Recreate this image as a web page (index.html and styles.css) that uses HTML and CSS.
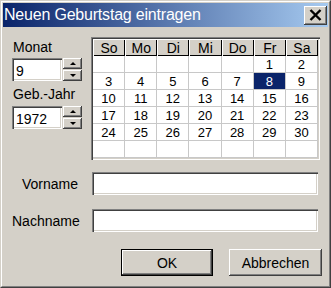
FILE: index.html
```html
<!DOCTYPE html>
<html lang="de">
<head>
    <meta charset="UTF-8">
    <title>Neuen Geburtstag eintragen</title>
    <link rel="stylesheet" href="styles.css">
</head>
<body>
    <div class="window">
        <div class="frame">
            <div class="titlebar">
                <span class="title">Neuen Geburtstag eintragen</span>
                <span class="close">
                    <svg width="13" height="12" viewBox="0 0 13 12">
                        <path d="M1.5 1 L11.5 11 M11.5 1 L1.5 11" stroke="#000" stroke-width="2.4" fill="none"/>
                    </svg>
                </span>
            </div>

            <div class="content">
                <div class="top">
                    <div class="side">
                        <label class="lbl">Monat</label>
                        <div class="spin">
                            <input class="field" type="text" value="9">
                            <div class="arrows">
                                <span class="arrow"><i class="up"></i></span>
                                <span class="arrow"><i class="down"></i></span>
                            </div>
                        </div>

                        <label class="lbl lbl-year">Geb.-Jahr</label>
                        <div class="spin">
                            <input class="field" type="text" value="1972">
                            <div class="arrows">
                                <span class="arrow"><i class="up"></i></span>
                                <span class="arrow"><i class="down"></i></span>
                            </div>
                        </div>
                    </div>

                    <div class="calendar">
                        <div class="cal-grid">
                            <div class="head">So</div>
                            <div class="head">Mo</div>
                            <div class="head">Di</div>
                            <div class="head">Mi</div>
                            <div class="head">Do</div>
                            <div class="head">Fr</div>
                            <div class="head">Sa</div>

                            <div class="day"></div><div class="day"></div><div class="day"></div><div class="day"></div><div class="day"></div><div class="day">1</div><div class="day">2</div>
                            <div class="day">3</div><div class="day">4</div><div class="day">5</div><div class="day">6</div><div class="day">7</div><div class="day selected">8</div><div class="day">9</div>
                            <div class="day">10</div><div class="day">11</div><div class="day">12</div><div class="day">13</div><div class="day">14</div><div class="day">15</div><div class="day">16</div>
                            <div class="day">17</div><div class="day">18</div><div class="day">19</div><div class="day">20</div><div class="day">21</div><div class="day">22</div><div class="day">23</div>
                            <div class="day">24</div><div class="day">25</div><div class="day">26</div><div class="day">27</div><div class="day">28</div><div class="day">29</div><div class="day">30</div>
                            <div class="day"></div><div class="day"></div><div class="day"></div><div class="day"></div><div class="day"></div><div class="day"></div><div class="day"></div>
                        </div>
                    </div>
                </div>

                <div class="names">
                    <label class="name-lbl" for="vorname">Vorname</label>
                    <input class="field name-field" type="text" id="vorname">

                    <label class="name-lbl" for="nachname">Nachname</label>
                    <input class="field name-field" type="text" id="nachname">
                </div>

                <div class="buttons">
                    <button class="btn btn-default">OK</button>
                    <button class="btn">Abbrechen</button>
                </div>
            </div>
        </div>
    </div>
</body>
</html>
```

FILE: styles.css
```css
body {
    margin: 0;
    padding: 0;
    background: #d4d0c8;
    font-family: 'Liberation Sans', Arial, sans-serif;
}
.window {
    width: 331px;
    height: 288px;
    box-sizing: border-box;
    border: 1px solid;
    border-color: #d4d0c8 #404040 #404040 #d4d0c8;
    background: #d4d0c8;
    display: flex;
}
.frame {
    flex: 1;
    border: 1px solid;
    border-color: #fff #808080 #808080 #fff;
    padding: 1px;
    display: flex;
    flex-direction: column;
}
.titlebar {
    height: 24px;
    background: linear-gradient(to right, #0a246a, #a6caf0);
    display: flex;
    align-items: center;
    justify-content: space-between;
    padding: 0 1px 0 1px;
}
.title {
    color: #fff;
    font-size: 16px;
    letter-spacing: -0.2px;
    padding-bottom: 1px;
}
.close {
    width: 23px;
    height: 19px;
    box-sizing: border-box;
    background: #d4d0c8;
    box-shadow: inset -1px -1px #404040, inset 1px 1px #fff, inset -2px -2px #808080;
    display: flex;
    align-items: center;
    justify-content: center;
}
.content {
    flex: 1;
    padding: 11px 0 0 9px;
    font-size: 14px;
    color: #000;
}
.top {
    display: flex;
    gap: 9px;
}
.side {
    width: 70px;
    display: flex;
    flex-direction: column;
}
.lbl {
    display: block;
    line-height: 16px;
    margin: 1px 0 3px 1px;
}
.lbl-year {
    margin-top: 5px;
    margin-bottom: 4px;
}
.spin {
    display: flex;
    gap: 1px;
}
.field {
    box-sizing: border-box;
    height: 23px;
    border: none;
    margin: 0;
    padding: 2px 4px 0;
    background: #fff;
    font-family: 'Liberation Sans', Arial, sans-serif;
    font-size: 14px;
    color: #000;
    box-shadow: inset 1px 1px #808080, inset 2px 2px #404040, inset -1px -1px #fff, inset -2px -2px #d4d0c8;
    outline: none;
}
.spin .field {
    width: 50px;
}
.arrows {
    display: flex;
    flex-direction: column;
    gap: 1px;
}
.arrow {
    width: 19px;
    height: 11px;
    box-sizing: border-box;
    background: #d4d0c8;
    box-shadow: inset -1px -1px #404040, inset 1px 1px #fff, inset -2px -2px #808080;
    display: flex;
    align-items: center;
    justify-content: center;
}
.arrow i {
    width: 0;
    height: 0;
    border-left: 3px solid transparent;
    border-right: 3px solid transparent;
}
.arrow .up {
    border-bottom: 3px solid #000;
}
.arrow .down {
    border-top: 3px solid #000;
}
.calendar {
    width: 229px;
    height: 123px;
    margin-top: -1px;
    box-sizing: border-box;
    padding: 2px;
    background: #fff;
    box-shadow: inset 1px 1px #808080, inset 2px 2px #404040, inset -1px -1px #fff, inset -2px -2px #d4d0c8;
}
.cal-grid {
    height: 100%;
    display: grid;
    grid-template-columns: repeat(7, 1fr);
    grid-template-rows: 17px repeat(6, 1fr);
    font-size: 13px;
}
.head {
    background: #d4d0c8;
    box-shadow: inset 1px 1px #fff, inset -1px -1px #000;
    display: flex;
    align-items: center;
    justify-content: center;
    font-size: 14px;
}
.day {
    border-right: 1px solid #c8c8c8;
    border-bottom: 1px solid #c8c8c8;
    display: flex;
    align-items: center;
    justify-content: center;
}
.day.selected {
    background: #0a246a;
    color: #fff;
}
.names {
    display: grid;
    grid-template-columns: 66px 226px;
    column-gap: 14px;
    row-gap: 14px;
    margin-top: 12px;
    align-items: center;
}
.name-lbl {
    text-align: right;
}
.name-field {
    width: 226px;
}
.buttons {
    display: flex;
    justify-content: flex-end;
    gap: 16px;
    margin-top: 17px;
    padding-right: 6px;
}
.btn {
    width: 92px;
    height: 27px;
    border: none;
    margin: 0;
    padding: 0;
    background: #d4d0c8;
    font-family: 'Liberation Sans', Arial, sans-serif;
    font-size: 14px;
    color: #000;
    box-shadow: inset -1px -1px #404040, inset 1px 1px #fff, inset -2px -2px #808080;
}
.btn + .btn {
    width: 93px;
}
.btn-default {
    box-shadow: inset 0 0 0 1px #000, inset -2px -2px #404040, inset 2px 2px #fff, inset -3px -3px #808080;
}
```
